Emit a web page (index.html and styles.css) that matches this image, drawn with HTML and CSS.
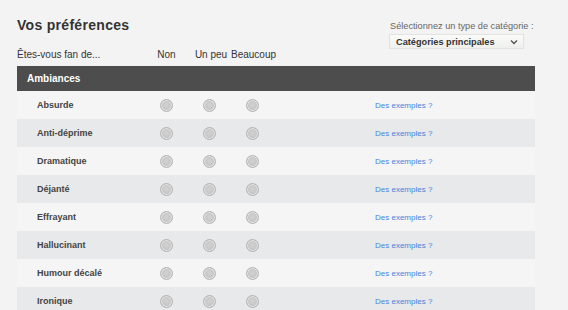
FILE: index.html
```html
<!DOCTYPE html>
<html lang="fr">
<head>
    <meta charset="UTF-8">
    <meta name="viewport" content="width=device-width, initial-scale=1.0">
    <title>Vos préférences</title>
    <link rel="stylesheet" href="styles.css">
</head>
<body>
    <div class="prefs">
        <div class="prefs-top">
            <h1>Vos préférences</h1>
            <div class="cat-select">
                <div class="cat-label">Sélectionnez un type de catégorie :</div>
                <div class="select-box">
                    <span>Catégories principales</span>
                    <svg width="8" height="6" viewBox="0 0 8 6"><path d="M1 1.5 L4 4.5 L7 1.5" fill="none" stroke="#555" stroke-width="1.4"/></svg>
                </div>
            </div>
        </div>

        <div class="grid head">
            <div class="label">Êtes-vous fan de...</div>
            <div class="col">Non</div>
            <div class="col">Un peu</div>
            <div class="col">Beaucoup</div>
        </div>

        <div class="section-bar">Ambiances</div>

        <div class="grid row">
            <div class="label">Absurde</div>
            <div class="col"><span class="radio"></span></div>
            <div class="col"><span class="radio"></span></div>
            <div class="col"><span class="radio"></span></div>
            <a class="examples" href="#">Des exemples ?</a>
        </div>
        <div class="grid row">
            <div class="label">Anti-déprime</div>
            <div class="col"><span class="radio"></span></div>
            <div class="col"><span class="radio"></span></div>
            <div class="col"><span class="radio"></span></div>
            <a class="examples" href="#">Des exemples ?</a>
        </div>
        <div class="grid row">
            <div class="label">Dramatique</div>
            <div class="col"><span class="radio"></span></div>
            <div class="col"><span class="radio"></span></div>
            <div class="col"><span class="radio"></span></div>
            <a class="examples" href="#">Des exemples ?</a>
        </div>
        <div class="grid row">
            <div class="label">Déjanté</div>
            <div class="col"><span class="radio"></span></div>
            <div class="col"><span class="radio"></span></div>
            <div class="col"><span class="radio"></span></div>
            <a class="examples" href="#">Des exemples ?</a>
        </div>
        <div class="grid row">
            <div class="label">Effrayant</div>
            <div class="col"><span class="radio"></span></div>
            <div class="col"><span class="radio"></span></div>
            <div class="col"><span class="radio"></span></div>
            <a class="examples" href="#">Des exemples ?</a>
        </div>
        <div class="grid row">
            <div class="label">Hallucinant</div>
            <div class="col"><span class="radio"></span></div>
            <div class="col"><span class="radio"></span></div>
            <div class="col"><span class="radio"></span></div>
            <a class="examples" href="#">Des exemples ?</a>
        </div>
        <div class="grid row">
            <div class="label">Humour décalé</div>
            <div class="col"><span class="radio"></span></div>
            <div class="col"><span class="radio"></span></div>
            <div class="col"><span class="radio"></span></div>
            <a class="examples" href="#">Des exemples ?</a>
        </div>
        <div class="grid row">
            <div class="label">Ironique</div>
            <div class="col"><span class="radio"></span></div>
            <div class="col"><span class="radio"></span></div>
            <div class="col"><span class="radio"></span></div>
            <a class="examples" href="#">Des exemples ?</a>
        </div>
    </div>
</body>
</html>
```

FILE: styles.css
```css
body {
    margin: 0;
    font-family: 'Liberation Sans', Arial, sans-serif;
    background-color: #f3f3f3;
    color: #333;
    overflow: hidden;
}

.prefs {
    width: 518px;
    padding-left: 17px;
}

.prefs-top {
    display: flex;
    justify-content: space-between;
    align-items: flex-start;
    height: 48px;
}

h1 {
    margin: 17px 0 0;
    font-size: 14px;
    letter-spacing: 0.3px;
    color: #333;
}

.cat-select {
    margin-top: 20px;
    width: 146px;
}

.cat-label {
    font-size: 9.2px;
    color: #666;
    line-height: 12px;
    white-space: nowrap;
    padding-left: 1px;
}

.select-box {
    margin-top: 2px;
    height: 15px;
    display: flex;
    justify-content: space-between;
    align-items: center;
    padding: 0 5px 0 6px;
    box-sizing: border-box;
    width: 135px;
    background: linear-gradient(#fbfbf9, #efefec);
    border: 1px solid #e2e2de;
    font-size: 9.2px;
    font-weight: bold;
    color: #333;
}

.grid {
    display: grid;
    grid-template-columns: 128px 43px 43px 43px 1fr;
    align-items: center;
}

.head {
    height: 18px;
    align-items: start;
    line-height: 14px;
    font-size: 10px;
    color: #333;
}

.col {
    text-align: center;
    line-height: 0;
}

.head .col {
    line-height: 14px;
}

.head .col:nth-child(3) {
    padding-left: 3px;
}

.section-bar {
    height: 25px;
    line-height: 25px;
    background: #4d4d4d;
    color: #fff;
    font-size: 10px;
    font-weight: bold;
    padding-left: 10px;
}

.row {
    height: 28px;
    background: #f5f5f5;
}

.row:nth-child(odd) {
    background: #e8e9ea;
}

.row .label {
    padding-left: 20px;
    font-size: 9px;
    font-weight: bold;
    color: #444;
}

.radio {
    display: inline-block;
    width: 11px;
    height: 11px;
    border-radius: 50%;
    border: 1px solid #b2b2b2;
    background: radial-gradient(circle at 50% 45%, #d2d2d2, #c2c2c2 75%);
    box-shadow: inset 0 0 0 1px #e4e4e4;
}

.examples {
    padding-left: 101px;
    font-size: 8px;
    color: #4582dc;
    text-decoration: none;
}
```
